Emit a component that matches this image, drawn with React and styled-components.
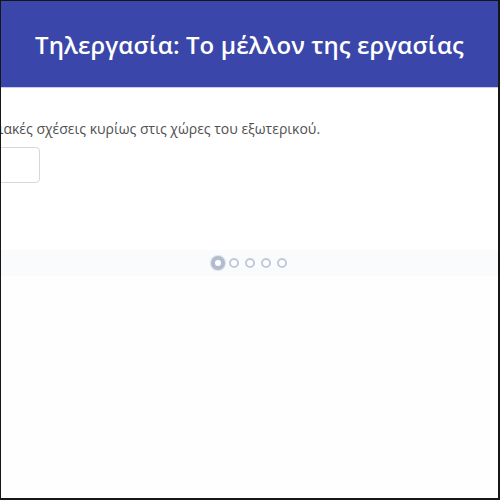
import React from 'react'
import styled, { createGlobalStyle } from 'styled-components'

const GlobalStyle = createGlobalStyle`
    html, body {
        margin: 0;
        padding: 0;
        background: #ffffff;
    }
`;

const Page = styled.div`
    width: 500px;
    height: 500px;
    box-sizing: border-box;
    border: 1px solid #161616;
    border-right-width: 2px;
    border-bottom-width: 2px;
    background: #fefefe;
    overflow: hidden;
    font-family: "Open Sans", "Noto Sans", sans-serif;
`;

const Header = styled.header`
    display: flex;
    align-items: center;
    justify-content: center;
    height: 86px;
    background: #3b46aa;
    border-bottom: 1px solid #c9cde8;
`;

const Title = styled.h1`
    margin: 0;
    color: #ffffff;
    font-size: 24px;
    font-weight: 600;
    letter-spacing: 0.1px;
`;

const Carousel = styled.section`
    overflow: hidden;
    background: #ffffff;
`;

const Slide = styled.div`
    display: flex;
    flex-direction: column;
    align-items: flex-start;
    gap: 9px;
    box-sizing: border-box;
    padding-top: 31px;
    height: 162px;
    transform: translateX(${(p) => p.$offset}px);
`;

const Caption = styled.p`
    margin: 0;
    color: #505050;
    font-size: 14px;
    white-space: nowrap;
`;

const MoreButton = styled.button`
    width: 100px;
    height: 36px;
    border: 1px solid #d8d8d8;
    border-radius: 4px;
    background: #ffffff;
`;

const Dots = styled.div`
    display: flex;
    align-items: center;
    justify-content: center;
    height: 26px;
    background: #fafbfc;
`;

const Dot = styled.span`
    display: block;
    box-sizing: border-box;
    width: ${(p) => (p.$active ? 14 : 10)}px;
    height: ${(p) => (p.$active ? 14 : 10)}px;
    margin: 0 ${(p) => (p.$active ? 1 : 3)}px;
    border-radius: 50%;
    border: ${(p) => (p.$active ? 4 : 2.5)}px solid ${(p) => (p.$active ? '#b2bbcf' : '#c2c9d9')};
    background: #ffffff;
    box-shadow: ${(p) => (p.$active ? '0 0 0 1px rgba(178, 187, 207, 0.4)' : 'none')};
`;

const App = () => {
    const dots = [0, 1, 2, 3, 4];
    return (
        <Page>
            <GlobalStyle />
            <Header>
                <Title>Τηλεργασία: Το μέλλον της εργασίας</Title>
            </Header>
            <Carousel>
                <Slide $offset={-61}>
                    <Caption>Οι εργασιακές σχέσεις κυρίως στις χώρες του εξωτερικού.</Caption>
                    <MoreButton aria-label="Περισσότερα" />
                </Slide>
            </Carousel>
            <Dots>
                {dots.map((d) => (
                    <Dot key={d} $active={d === 0} />
                ))}
            </Dots>
        </Page>
    )
}

export default App
